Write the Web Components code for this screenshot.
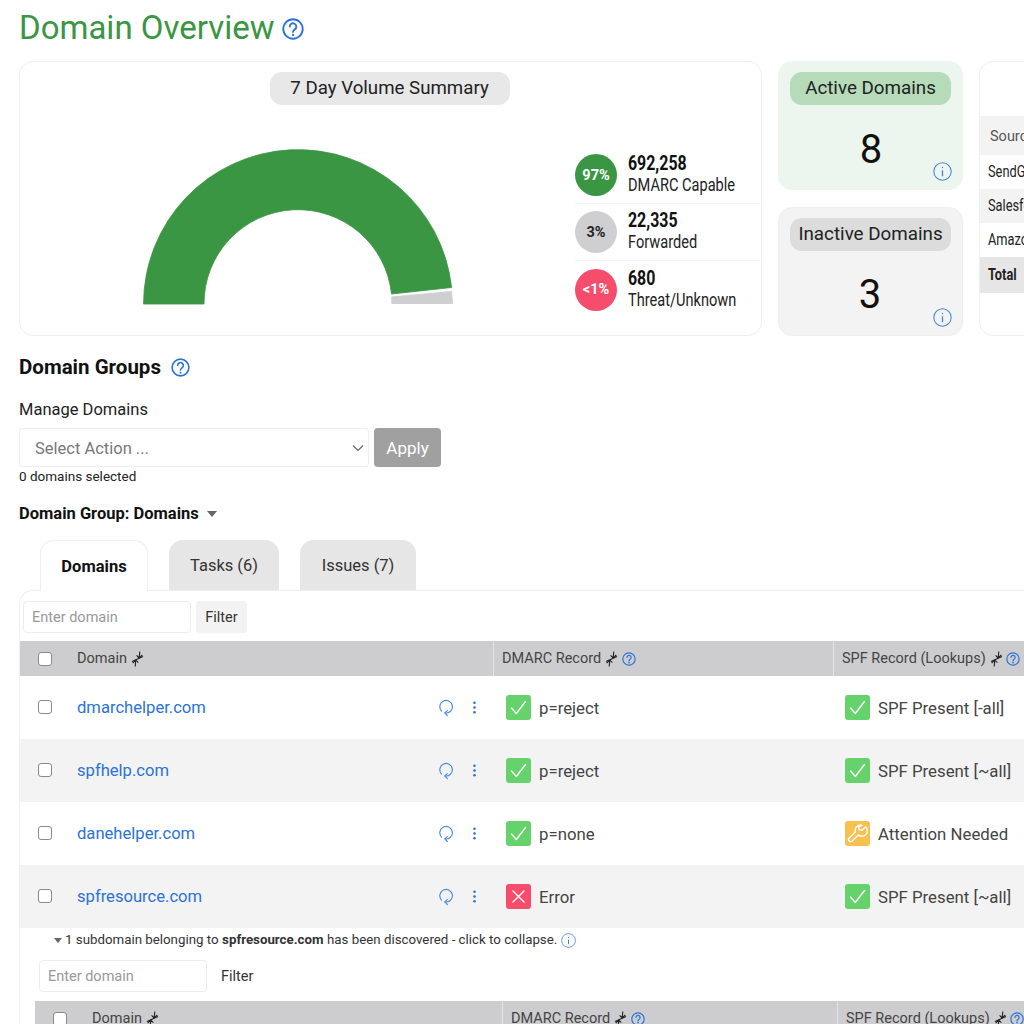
<!DOCTYPE html>
<html>
<head>
<meta charset="utf-8">
<title>Domain Overview</title>
<style>
html, body { margin: 0; height: 1024px; overflow: hidden; background: #fff; }
body { font-family: Roboto, "Liberation Sans", sans-serif; color: #222; }
</style>
</head>
<body>
<domain-page></domain-page>

<script>
const HELP = size => `<svg width="${size}" height="${size}" viewBox="0 0 24 24" fill="none" stroke="#2b72d8" stroke-width="2" stroke-linecap="round"><circle cx="12" cy="12" r="10.6"/><path d="M8.4 9.4a3.6 3.6 0 1 1 5.6 3c-1.3.9-2 1.500-2 2.900"/><circle cx="12" cy="18.500" r=".6" fill="#2b72d8" stroke-width="1.300"/></svg>`
const INFO = size => `<svg width="${size}" height="${size}" viewBox="0 0 24 24" fill="none" stroke="#3f84e5" stroke-width="1.300"><circle cx="12" cy="12" r="11"/><path d="M12 10.500v7.500" stroke-width="1.600"/><circle cx="12" cy="7" r=".9" fill="#3f84e5" stroke="none"/></svg>`
const SORT = `<svg width="15" height="16" viewBox="0 0 15 16" fill="none" stroke="#222" stroke-width="1.100"><path d="M2 10.500 13 5.500"/><path d="M9.800 0.500 9.200 7M9.200 7 6.600 4.300M9.200 7 12.300 4"/><path d="M5.200 15.500 5.800 9M5.800 9 2.700 12M5.800 9 8.300 11.700"/></svg>`

class HelpIcon extends HTMLElement {
    connectedCallback() {
        const size = this.getAttribute('size') || 24
        const kind = this.getAttribute('kind')
        this.attachShadow({ mode: 'open' }).innerHTML = `
            <style>:host { display: inline-flex; vertical-align: middle; }</style>
            ${kind === 'info' ? INFO(size) : HELP(size)}`
    }
}
customElements.define('help-icon', HelpIcon)

class StatusIcon extends HTMLElement {
    connectedCallback() {
        const kind = this.getAttribute('kind')
        const bg = { ok: '#66d26c', warn: '#f8c04f', err: '#f64d6c' }[kind]
        const glyph = {
            ok: '<path d="M5.500 13 10.300 18.500 19.500 6.500"/>',
            err: '<path d="M7 7 18 18M18 7 7 18"/>',
            warn: '<path d="M20.500 5.800 17 9.300l-2.800-.7-.7-2.800L17 4.300a5.300 5.300 0 0 0-6.600 6.600L4.200 17.100a2.100 2.100 0 0 0 3 3l6.200-6.200a5.300 5.300 0 0 0 7.100-8.100z"/>'
        }[kind]
        this.attachShadow({ mode: 'open' }).innerHTML = `
            <style>
            :host { display: inline-flex; width: 25px; height: 25px; border-radius: 3px; background: ${bg}; flex: none; }
            </style>
            <svg width="25" height="25" viewBox="0 0 25 25" fill="none" stroke="#fff" stroke-width="1.400" stroke-linecap="round" stroke-linejoin="round">${glyph}</svg>`
    }
}
customElements.define('status-icon', StatusIcon)

class ChartLegend extends HTMLElement {
    connectedCallback() {
        const bg = this.getAttribute('bg')
        const fg = this.getAttribute('fg')
        this.attachShadow({ mode: 'open' }).innerHTML = `
            <style>
            :host { display: flex; align-items: center; gap: 11px; height: 57px; box-sizing: border-box; border-bottom: 1px solid #f3f3f3; }
            :host(:last-child) { border-bottom: 0; }
            .dot { width: 42px; height: 42px; border-radius: 50%; background: ${bg}; color: ${fg}; font: 700 14.500px Roboto, sans-serif; display: flex; align-items: center; justify-content: center; flex: none; }
            .txt { white-space: nowrap; margin-top: -2px; }
            b, span { display: block; transform-origin: left center; }
            b { font: 700 20px/22px Roboto, sans-serif; color: #111; transform: scaleX(.795); }
            span { font: 400 18px/22px Roboto, sans-serif; color: #222; transform: scaleX(.81); }
            </style>
            <div class="dot">${this.getAttribute('pct')}</div>
            <div class="txt"><b>${this.getAttribute('num')}</b><span>${this.getAttribute('label')}</span></div>`
    }
}
customElements.define('chart-legend', ChartLegend)

class SummaryCard extends HTMLElement {
    constructor() {
        super()
        this.attachShadow({ mode: 'open' }).innerHTML = `
            <style>
            :host { display: block; width: 743px; height: 275px; box-sizing: border-box; border: 1px solid #efefef; border-radius: 14px; flex: none; padding-top: 10px; }
            .pill { width: 240px; height: 33px; margin: 0 auto; position: relative; left: -1px; border-radius: 12px; background: #e8e8e8; font-size: 18.700px; line-height: 33px; text-align: center; color: #222; }
            .body { display: flex; align-items: flex-start; margin-top: 44px; }
            svg { margin-left: 122px; flex: none; }
            .legend { margin-left: 121px; flex: 1; margin-top: -2px; }
            </style>
            <div class="pill">7 Day Volume Summary</div>
            <div class="body">
                <svg width="312" height="158" viewBox="-156 -155 312 158">
                    <path d="M-154.500 0A154.500 154.500 0 0 1 153.600 -16.500L93.500 -10A94 94 0 0 0 -94 0Z" fill="#3a9643" stroke="#3a9643" stroke-width=".8" stroke-linejoin="round"/>
                    <path d="M153.500 -12.500 154.500 -0.500 93.800 -0.500 93.800 -7Z" fill="#cfcfd1" stroke="#cfcfd1" stroke-width="1" stroke-linejoin="round"/>
                </svg>
                <div class="legend"><slot></slot></div>
            </div>`
    }
}
customElements.define('summary-card', SummaryCard)

class CountCard extends HTMLElement {
    connectedCallback() {
        const active = this.hasAttribute('active')
        this.attachShadow({ mode: 'open' }).innerHTML = `
            <style>
            :host { display: block; position: relative; width: 185px; height: 129px; box-sizing: border-box; border-radius: 14px; padding: 10px 11px 0; border: 1px solid ${active ? '#ecf6ee' : '#efefef'}; background: ${active ? '#ecf6ee' : '#f3f3f3'}; }
            .pill { height: 33px; line-height: 33px; border-radius: 12px; text-align: center; font-size: 18.800px; background: ${active ? '#b6dbb9' : '#dcdcdc'}; color: #222; white-space: nowrap; }
            .num { text-align: center; font-size: 40px; line-height: 46px; margin-top: 21px; color: #111; padding-left: 1px; ${active ? 'padding-top: 1px;' : 'padding-right: 2px;'} }
            help-icon { position: absolute; right: 10px; bottom: 8px; }
            </style>
            <div class="pill">${this.getAttribute('label')}</div>
            <div class="num">${this.getAttribute('count')}</div>
            <help-icon kind="info" size="19"></help-icon>`
    }
}
customElements.define('count-card', CountCard)

class SourceCard extends HTMLElement {
    constructor() {
        super()
        this.attachShadow({ mode: 'open' }).innerHTML = `
            <style>
            :host { display: block; width: 420px; height: 275px; box-sizing: border-box; border: 1px solid #efefef; border-radius: 14px; flex: none; padding-top: 54px; font-size: 16px; overflow: hidden; }
            div { padding-left: 8px; height: 34px; line-height: 34px; color: #222; }
            span { display: inline-block; transform: scaleX(.8); transform-origin: left center; }
            .h { height: 39px; line-height: 39px; background: #f3f3f3; padding-left: 10px; color: #555; }
            .h span { font-size: 14.500px; transform: none; }
            .alt { background: #f3f3f3; }
            .t { height: 36px; line-height: 36px; background: #e6e6e6; font-weight: 700; }
            </style>
            <div class="h"><span>Source</span></div>
            <div><span>SendGrid</span></div>
            <div class="alt"><span>Salesforce</span></div>
            <div><span>Amazon SES</span></div>
            <div class="t"><span>Total</span></div>`
    }
}
customElements.define('source-card', SourceCard)

class ManageDomains extends HTMLElement {
    constructor() {
        super()
        this.attachShadow({ mode: 'open' }).innerHTML = `
            <style>
            :host { display: block; }
            .lbl { font-size: 16.500px; line-height: 19px; color: #222; }
            .row { display: flex; gap: 5px; margin-top: 9px; }
            .sel { width: 350px; height: 39px; box-sizing: border-box; border: 1px solid #ededed; border-radius: 4px; padding: 1px 4px 0 15px; display: flex; align-items: center; justify-content: space-between; color: #777; font-size: 16.500px; }
            .btn { width: 67px; height: 39px; border-radius: 4px; background: #a0a0a0; color: #fff; font-size: 17px; line-height: 40px; text-align: center; }
            .cnt { font-size: 13.500px; line-height: 16px; margin-top: 1px; color: #222; }
            </style>
            <div class="lbl">Manage Domains</div>
            <div class="row">
                <div class="sel">Select Action ...
                    <svg width="12" height="8" viewBox="0 0 12 8" fill="none" stroke="#666" stroke-width="1.200"><path d="M1 1.500 6 6.500 11 1.500"/></svg>
                </div>
                <div class="btn">Apply</div>
            </div>
            <div class="cnt">0 domains selected</div>`
    }
}
customElements.define('manage-domains', ManageDomains)

class TabBar extends HTMLElement {
    constructor() {
        super()
        this.attachShadow({ mode: 'open' }).innerHTML = `
            <style>
            :host { display: flex; gap: 21px; padding-left: 21px; height: 51px; box-sizing: border-box; position: relative; z-index: 1; margin-bottom: -1px; }
            div { height: 50px; line-height: 52px; box-sizing: border-box; border-radius: 14px 14px 0 0; background: #e6e6e6; font-size: 16.500px; text-align: center; color: #333; }
            .on { width: 108px; background: #fff; border: 1px solid #efefef; border-bottom: 0; height: 51px; font-weight: 700; color: #111; line-height: 51px; }
            </style>
            <div class="on">Domains</div>
            <div style="width:110px">Tasks (6)</div>
            <div style="width:116px">Issues (7)</div>`
    }
}
customElements.define('tab-bar', TabBar)

class FilterBar extends HTMLElement {
    connectedCallback() {
        const sub = this.hasAttribute('sub')
        this.attachShadow({ mode: 'open' }).innerHTML = `
            <style>
            :host { display: flex; align-items: center; gap: ${sub ? 14 : 5}px; }
            .in { width: 168px; height: 32px; box-sizing: border-box; border: 1px solid #ededed; border-radius: 4px; padding-left: 8px; line-height: 32px; font-size: 14.500px; color: #999; }
            .f { ${sub ? '' : 'background: #f3f3f3; width: 51px; text-align: center;'} height: 32px; line-height: 33px; border-radius: 3px; font-size: 14.500px; color: #333; }
            </style>
            <div class="in">Enter domain</div>
            <div class="f">Filter</div>`
    }
}
customElements.define('filter-bar', FilterBar)

// one grid row, header or data. --cols comes from the table around it
class TableHead extends HTMLElement {
    connectedCallback() {
        const help = `<help-icon size="14"></help-icon>`
        this.attachShadow({ mode: 'open' }).innerHTML = `
            <style>
            :host { display: grid; grid-template-columns: var(--cols); height: 35px; background: #cdcdcf; font-size: 14.500px; color: #444; white-space: nowrap; }
            div { display: flex; align-items: center; gap: 3px; border-right: 1px solid #e4e4e4; padding-left: var(--pad-col); }
            div.first { padding-left: var(--pad-check); }
            i { margin-right: 22px; background: #fff; border: 1px solid #8a8a8a; border-radius: 3px; box-sizing: border-box; width: 14px; height: 14px; flex: none; }
            help-icon { margin-left: 0; }
            .spf help-icon { margin-left: -1px; }
            svg { flex: none; }
            </style>
            <div class="first"><i></i>Domain ${SORT}</div>
            <div>DMARC Record ${SORT}${help}</div>
            <div class="spf">SPF Record (Lookups) ${SORT}${help}</div>`
    }
}
customElements.define('table-head', TableHead)

class DomainRow extends HTMLElement {
    connectedCallback() {
        const a = this.getAttribute.bind(this)
        this.attachShadow({ mode: 'open' }).innerHTML = `
            <style>
            :host { display: grid; grid-template-columns: var(--cols); height: 63px; align-items: center; font-size: 16.800px; color: #444; background: ${this.hasAttribute('alt') ? '#f3f3f3' : '#fff'}; white-space: nowrap; }
            .d { display: flex; align-items: center; padding-left: 18px; }
            i { width: 14px; height: 14px; background: #fff; border: 1px solid #8a8a8a; border-radius: 3px; box-sizing: border-box; flex: none; margin-right: 25px; margin-top: -2px; }
            a { color: #2b72d8; flex: 1; font-size: 16.600px; }
            .acts { display: flex; width: 56px; align-items: center; gap: 19px; }
            .c { display: flex; align-items: center; gap: 8px; padding-left: 12px; }
            .c + .c { padding-left: 11px; }
            </style>
            <div class="d"><i></i><a>${a('domain')}</a>
                <span class="acts">
                    <svg width="16" height="18" viewBox="0 0 16 18" fill="none" stroke="#4b8fe8" stroke-width="1.200" stroke-linecap="round" stroke-linejoin="round"><path d="M3.500 12A6.300 6.300 0 1 1 7 13.900"/><path d="M9.300 11.600 6.800 13.900 9.300 16.500"/></svg>
                    <svg width="3" height="13" viewBox="0 0 3 13" fill="#2b72d8"><circle cx="1.500" cy="1.700" r="1.300"/><circle cx="1.500" cy="6.500" r="1.300"/><circle cx="1.500" cy="11.300" r="1.300"/></svg>
                </span>
            </div>
            <div class="c"><status-icon kind="${a('dk')}"></status-icon>${a('dmarc')}</div>
            <div class="c"><status-icon kind="${a('sk')}"></status-icon>${a('spf')}</div>`
    }
}
customElements.define('domain-row', DomainRow)

class SubdomainPanel extends HTMLElement {
    constructor() {
        super()
        this.attachShadow({ mode: 'open' }).innerHTML = `
            <style>
            :host { display: block; --cols: 468px 335px 500px; --pad-check: 18px; --pad-col: 8px; }
            .note { height: 24px; line-height: 24px; padding-left: 34px; font-size: 13.300px; color: #333; white-space: nowrap; display: flex; align-items: center; }
            .tri { width: 0; height: 0; border: 4px solid transparent; border-top: 5px solid #666; border-bottom: 0; margin-right: 3px; }
            b { font-weight: 700; margin: 0 3.500px; }
            help-icon { margin-left: 4px; }
            filter-bar { margin: 8px 0 9px 19px; }
            table-head { margin-left: 15px; width: 1400px; }
            </style>
            <div class="note"><span class="tri"></span>1 subdomain belonging to <b>spfresource.com</b> has been discovered - click to collapse. <help-icon kind="info" size="15"></help-icon></div>
            <filter-bar sub></filter-bar>
            <table-head></table-head>`
    }
}
customElements.define('subdomain-panel', SubdomainPanel)

class DomainPage extends HTMLElement {
    constructor() {
        super()
        this.attachShadow({ mode: 'open' }).innerHTML = `
            <style>
            :host { display: block; padding-left: 19px; width: 1400px; box-sizing: border-box; color: #222; }
            h1 { margin: 0; padding-top: 10px; height: 61px; box-sizing: border-box; font-size: 33px; line-height: 36px; font-weight: 400; color: #3a9643; display: flex; align-items: flex-start; gap: 7px; }
            h1 help-icon { margin-top: 8px; }
            .top { display: flex; gap: 16px; }
            .col { display: flex; flex-direction: column; gap: 17px; }
            h2 { margin: 20px 0 0; height: 22px; line-height: 22px; font-size: 20.500px; font-weight: 700; color: #111; display: flex; align-items: center; gap: 10px; }
            manage-domains { margin-top: 22px; }
            .grp { margin-top: 20px; height: 20px; line-height: 20px; font-size: 16.500px; font-weight: 700; color: #111; display: flex; align-items: center; gap: 8px; }
            .grp i { width: 0; height: 0; border: 5.500px solid transparent; border-top: 6px solid #666; border-bottom: 0; }
            tab-bar { margin-top: 16px; }
            .panel { border: 1px solid #efefef; border-right: 0; border-bottom: 0; border-top-left-radius: 14px; width: 1380px; box-sizing: border-box; --cols: 474px 340px 500px; --pad-check: 18px; --pad-col: 8px; }
            filter-bar { margin: 10px 0 8px 3px; }
            </style>
            <h1>Domain Overview <help-icon size="22"></help-icon></h1>
            <div class="top">
                <summary-card>
                    <chart-legend pct="97%" bg="#3a9643" fg="#fff" num="692,258" label="DMARC Capable"></chart-legend>
                    <chart-legend pct="3%" bg="#cfcfd1" fg="#222" num="22,335" label="Forwarded"></chart-legend>
                    <chart-legend pct="&lt;1%" bg="#f64d6c" fg="#fff" num="680" label="Threat/Unknown"></chart-legend>
                </summary-card>
                <div class="col">
                    <count-card active label="Active Domains" count="8"></count-card>
                    <count-card label="Inactive Domains" count="3"></count-card>
                </div>
                <source-card></source-card>
            </div>
            <h2>Domain Groups <help-icon size="19"></help-icon></h2>
            <manage-domains></manage-domains>
            <div class="grp">Domain Group: Domains <i></i></div>
            <tab-bar></tab-bar>
            <div class="panel">
                <filter-bar></filter-bar>
                <table-head></table-head>
                <domain-row domain="dmarchelper.com" dk="ok" dmarc="p=reject" sk="ok" spf="SPF Present [-all]"></domain-row>
                <domain-row alt domain="spfhelp.com" dk="ok" dmarc="p=reject" sk="ok" spf="SPF Present [~all]"></domain-row>
                <domain-row domain="danehelper.com" dk="ok" dmarc="p=none" sk="warn" spf="Attention Needed"></domain-row>
                <domain-row alt domain="spfresource.com" dk="err" dmarc="Error" sk="ok" spf="SPF Present [~all]"></domain-row>
                <subdomain-panel></subdomain-panel>
            </div>`
    }
}
customElements.define('domain-page', DomainPage)
</script>
</body>
</html>
